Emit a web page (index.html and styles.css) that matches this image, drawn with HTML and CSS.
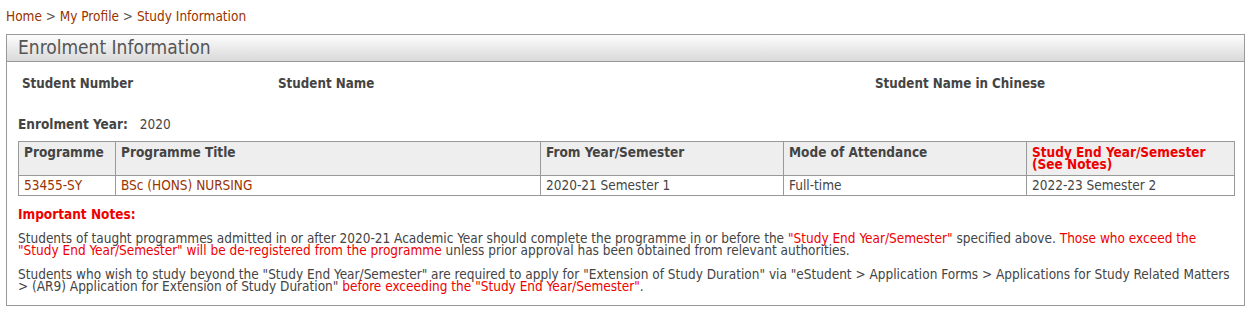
FILE: index.html
```html
<!DOCTYPE html>
<html lang="en">
<head>
    <meta charset="UTF-8">
    <title>Study Information</title>
    <link rel="stylesheet" href="styles.css">
</head>
<body>

<div class="breadcrumb">
    <a href="#">Home</a> &gt; <a href="#">My Profile</a> &gt; <a href="#">Study Information</a>
</div>

<div class="panel">
    <div class="panel-head">Enrolment Information</div>
    <div class="panel-body">
        <!-- Student info -->
        <div class="student-row">
            <span class="lbl lbl-number">Student Number</span>
            <span class="lbl lbl-name">Student Name</span>
            <span class="lbl lbl-chinese">Student Name in Chinese</span>
        </div>

        <div class="year-row"><b>Enrolment Year:</b><span class="year">2020</span></div>

        <!-- Programme table -->
        <table class="prog-table">
            <tr>
                <th class="c1">Programme</th>
                <th class="c2">Programme Title</th>
                <th class="c3">From Year/Semester</th>
                <th class="c4">Mode of Attendance</th>
                <th class="c5 red">Study End Year/Semester<br>(See Notes)</th>
            </tr>
            <tr>
                <td class="link">53455-SY</td>
                <td class="link">BSc (HONS) NURSING</td>
                <td>2020-21 Semester 1</td>
                <td>Full-time</td>
                <td>2022-23 Semester 2</td>
            </tr>
        </table>

        <div class="notes-title">Important Notes:</div>
        <p class="note first">Students of taught programmes admitted in or after 2020-21 Academic Year should complete the programme in or before the <span class="red">"Study End Year/Semester"</span> specified above. <span class="red">Those who exceed the "Study End Year/Semester" will be de-registered from the programme</span> unless prior approval has been obtained from relevant authorities.</p>
        <p class="note">Students who wish to study beyond the "Study End Year/Semester" are required to apply for "Extension of Study Duration" via "eStudent &gt; Application Forms &gt; Applications for Study Related Matters &gt; (AR9) Application for Extension of Study Duration" <span class="red">before exceeding the "Study End Year/Semester"</span>.</p>
    </div>
</div>

</body>
</html>
```

FILE: styles.css
```css
body {
    margin: 0;
    padding: 7px 8px 0 6px;
    font-family: "DejaVu Sans Condensed", "DejaVu Sans", sans-serif;
    font-size: 13.5px;
    color: #444;
    background: #fff;
}
.breadcrumb {
    font-size: 13.5px;
    color: #555;
    height: 18px;
    line-height: 18px;
    margin-bottom: 9px;
}
.breadcrumb a {
    color: #993300;
    text-decoration: none;
}
.panel {
    width: 1237px;
    border: 1px solid #999;
}
.panel-head {
    height: 26px;
    line-height: 25px;
    padding-left: 11px;
    font-size: 19px;
    color: #555;
    border-bottom: 1px solid #999;
    background: linear-gradient(#fdfdfd, #d9d9d9);
}
.panel-body {
    padding: 0 11px 13px 11px;
}
.student-row {
    display: flex;
    padding-top: 13px;
    height: 18px;
    line-height: 18px;
}
.lbl {
    font-weight: bold;
    font-size: 13.25px;
    color: #444;
}
.lbl-number {
    margin-left: 4px;
    width: 256px;
}
.lbl-name {
    width: 597px;
}
.year-row {
    margin-top: 22px;
    height: 18px;
    line-height: 18px;
}
.year-row b {
    color: #444;
}
.year {
    margin-left: 12px;
}
.prog-table {
    margin-top: 8px;
    width: 1217px;
    border-collapse: collapse;
}
.prog-table th,
.prog-table td {
    border: 1px solid #999;
    text-align: left;
    vertical-align: top;
    padding: 2px 5px;
}
.prog-table th {
    background: #eee;
    height: 27px;
    line-height: 12px;
    padding-top: 4px;
    font-weight: bold;
    color: #444;
}
.prog-table td {
    height: 15px;
    line-height: 15px;
    color: #444;
}
.c1 { width: 86px; }
.c2 { width: 414px; }
.c3 { width: 232px; }
.c4 { width: 232px; }
.prog-table td.link {
    color: #993300;
}
.red,
.prog-table th.red {
    color: #e00;
}
.notes-title {
    margin-top: 9px;
    font-weight: bold;
    color: #e00;
    height: 18px;
    line-height: 18px;
}
.note {
    margin: 12px 0 0 0;
    line-height: 12px;
    color: #444;
}
.note.first {
    margin-top: 9px;
}
```
